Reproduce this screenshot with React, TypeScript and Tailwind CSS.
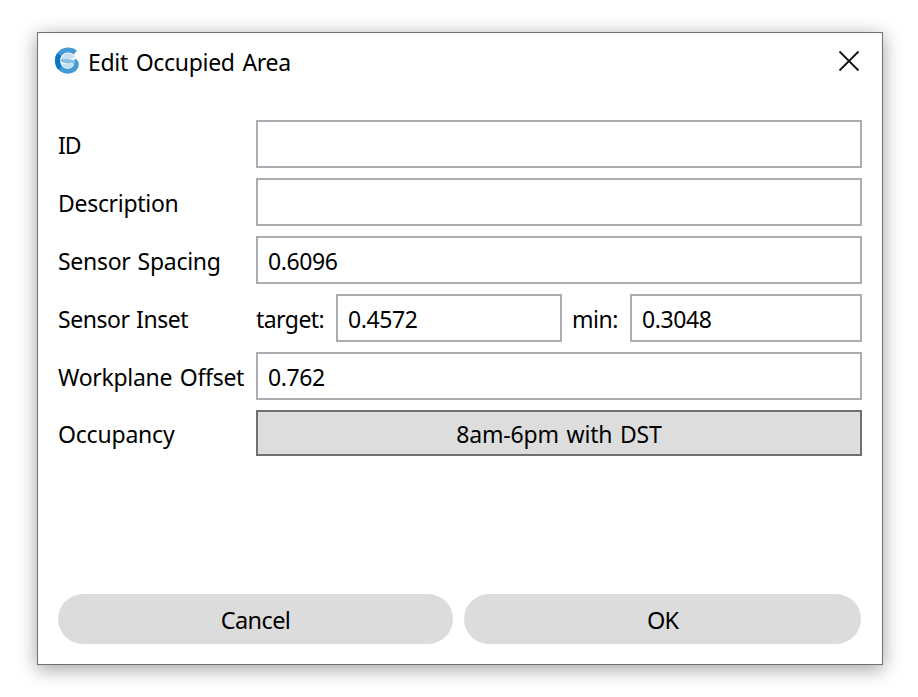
import React from "react";

type FieldProps = { label: string; labelClass: string; children: React.ReactNode };

function Row({ label, labelClass, children }: FieldProps) {
  return (
    <div className="flex">
      <div className="flex w-[198px] shrink-0 items-center pt-[2px] whitespace-nowrap">
        <span className={labelClass}>{label}</span>
      </div>
      {children}
    </div>
  );
}

function Field({ value = "", size = "flex-1" }: { value?: string; size?: string }) {
  return (
    <input
      type="text"
      defaultValue={value}
      className={`h-12 min-w-0 border-2 border-[#abadb3] bg-white pt-[2px] pl-[10px] tracking-[-0.4px] outline-none ${size}`}
    />
  );
}

function Logo() {
  return (
    <svg width="26" height="29" viewBox="0 0 26 29" fill="none">
      <path d="M22.3 6.6C18 2.9 10.8 3.2 7 7.6C3.2 12 3.4 18.8 7.8 22.7C11.8 26.2 18.8 26 22 22C24 19.4 23.8 16.2 21 14.6" stroke="#459bd3" strokeWidth="5" />
      <path d="M6.2 8.6C3.6 12.8 4 18.4 7.4 22" stroke="#0a78bf" strokeWidth="5" />
      <path d="M8.6 13C12 16.8 17 13.6 21.2 17.4" stroke="#86bfe2" strokeWidth="4.4" />
      <path d="M22.6 9.6L20.6 12.6C16.5 11.6 13 14.4 9.3 12.4C8.6 6.8 17 5.8 20 9.2Z" fill="#c3dff1" />
      <path d="M8.2 17.2C12.4 19 16.4 15.6 20.6 17.4C21.2 22.6 12.4 24 8.2 19.6Z" fill="#c3dff1" />
    </svg>
  );
}

export default function App() {
  return (
    <div className="h-[697px] w-[918px] overflow-hidden bg-white pt-8 pl-[37px] font-['Noto_Sans',sans-serif] text-[23px] leading-8 text-black">
      <div className="flex h-[633px] w-[846px] flex-col border border-[#707070] bg-white px-5 pb-5 shadow-[0_4px_18px_rgba(0,0,0,0.38)]">
        <header className="flex h-[87px] items-start pt-[13px]">
          <div className="-ml-[5px]"><Logo /></div>
          <h1 className="ml-[9px] tracking-[-0.3px] [word-spacing:2px]">Edit Occupied Area</h1>
          <button className="mt-[4px] mr-[2px] ml-auto" aria-label="Close">
            <svg width="22" height="22" viewBox="0 0 22 22" fill="none" stroke="#111" strokeWidth="1.8">
              <path d="M1.5 1.5L20.5 20.5M20.5 1.5L1.5 20.5" />
            </svg>
          </button>
        </header>
        <main className="flex flex-col gap-[10px]">
          <Row label="ID" labelClass="tracking-[-1px]"><Field /></Row>
          <Row label="Description" labelClass="tracking-[-0.3px]"><Field /></Row>
          <Row label="Sensor Spacing" labelClass="tracking-[-0.3px] [word-spacing:1.5px]"><Field value="0.6096" /></Row>
          <Row label="Sensor Inset" labelClass="tracking-[-0.45px] [word-spacing:1px]">
            <div className="flex flex-1 items-center">
              <span className="w-20 pt-[2px] tracking-[-0.55px]">target:</span>
              <Field value="0.4572" size="w-[226px]" />
              <span className="w-[68px] pt-[2px] pl-[10px] tracking-[-0.5px]">min:</span>
              <Field value="0.3048" size="w-[232px]" />
            </div>
          </Row>
          <Row label="Workplane Offset" labelClass="tracking-[-0.3px] [word-spacing:2px]"><Field value="0.762" /></Row>
          <Row label="Occupancy" labelClass="tracking-[-0.2px]">
            <button className="h-[46px] flex-1 border-2 border-[#707070] bg-[#dddddd] pt-[2px] tracking-[-0.2px] [word-spacing:2px]">8am-6pm with DST</button>
          </Row>
        </main>
        <footer className="mt-auto flex gap-[11px] pr-px">
          <button className="h-[50px] w-[395px] rounded-full bg-[#dcdcdc] pt-px text-[23.5px] tracking-[-0.6px]">Cancel</button>
          <button className="h-[50px] flex-1 rounded-full bg-[#dcdcdc] pt-px text-[23.5px] tracking-[-0.9px]">OK</button>
        </footer>
      </div>
    </div>
  );
}
